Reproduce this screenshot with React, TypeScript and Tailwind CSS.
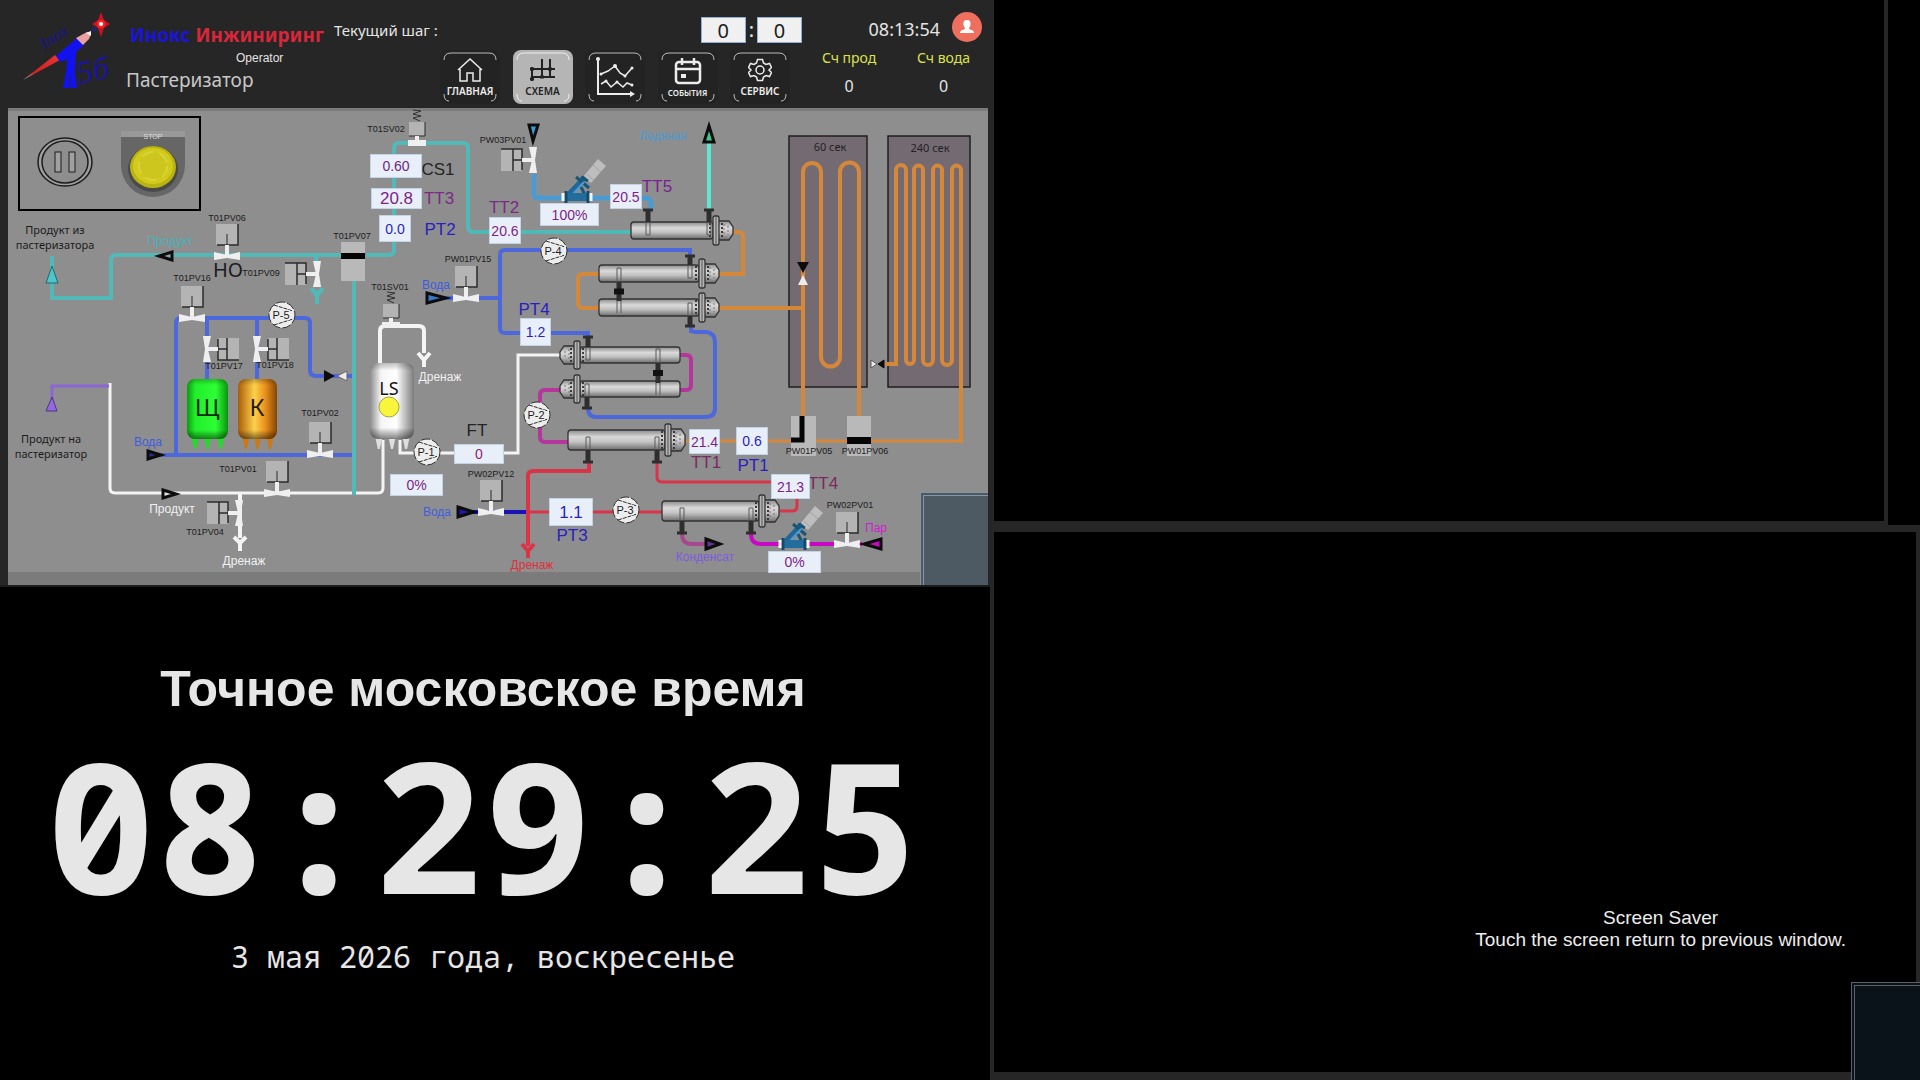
import type { ReactNode } from 'react';

const VIEW = { x: 8, y: 108, w: 980, h: 477 };

const pctX = (x: number) => `${((x - VIEW.x) / VIEW.w) * 100}%`;
const pctY = (y: number) => `${((y - VIEW.y) / VIEW.h) * 100}%`;

const C = {
  teal: '#52b9b9',
  ice: '#4a9bd3',
  cyan: '#5ce6d4',
  blue: '#4c68dc',
  orange: '#d6883a',
  magenta: '#b5359c',
  red: '#d93448',
  white: '#f4f4f4',
  violet: '#8d66d6',
};

type Pipe = { d: string; color: string; w?: number };

const pipes: Pipe[] = [
  { d: 'M52 256V298H111V260Q111 255 116 255H345', color: C.teal },
  { d: 'M366 255H389Q394 255 394 250V148Q394 143 399 143H463Q468 143 468 148V227Q468 232 473 232H632', color: C.teal },
  { d: 'M316 255V262', color: C.teal },
  { d: 'M534 174V193Q534 198 539 198H645Q651 198 651 204V210', color: C.ice, w: 5 },
  { d: 'M709 142V212', color: C.cyan },
  { d: 'M440 298H500M588 338V333H505Q500 333 500 328V255Q500 250 505 250H690V256', color: C.blue },
  { d: 'M691 326V331L695 332H706Q715 333 715 342V408Q715 417 706 417H596Q588 417 588 408', color: C.blue },
  { d: 'M160 455H352M176 455V323Q176 318 181 318H305Q310 318 310 323V370Q310 376 316 376H352M207 318V382M257 318V382', color: C.blue },
  { d: 'M732 232H738Q743 232 743 237V274H718', color: C.orange },
  { d: 'M600 274H583Q578 274 578 279V303Q578 308 583 308H600', color: C.orange },
  { d: 'M718 308H803', color: C.orange },
  { d: 'M686 441H800M815 441H850M870 441H961', color: C.orange, w: 3 },
  { d: 'M110 383V488Q110 493 115 493H378Q383 493 383 488V440', color: C.white, w: 3 },
  { d: 'M400 440V453H518V355H560', color: C.white, w: 3 },
  { d: 'M380 363V331Q380 326 385 326H419Q424 326 424 331V353', color: C.white },
  { d: 'M240 493V538', color: C.white },
  { d: 'M52 400V386H109', color: C.violet, w: 3 },
  { d: 'M680 355H686Q691 355 691 360V385Q691 390 686 390H680', color: C.magenta },
  { d: 'M560 390H545Q540 390 540 395V437Q540 442 545 442H568', color: C.magenta },
  { d: 'M589 462V471H533Q528 471 528 476V546', color: C.red },
  { d: 'M657 462V477Q657 482 662 482H775M780 511H792Q797 511 797 506V498M528 512H662', color: C.red, w: 3 },
  { d: 'M470 512H526', color: '#1b12b4' },
  { d: 'M751 534Q751 544 761 544H862', color: '#c908c6' },
  { d: 'M682 534Q682 544 692 544H708', color: '#a8478f' },
  // teal riser crosses over the water and product lines
  { d: 'M354 280V495', color: C.teal },
];

type Rotation = 'up' | 'left' | 'right';

const valves: { x: number; y: number; dir: Rotation }[] = [
  { x: 227, y: 256, dir: 'up' },
  { x: 192, y: 318, dir: 'up' },
  { x: 320, y: 454, dir: 'up' },
  { x: 277, y: 493, dir: 'up' },
  { x: 466, y: 298, dir: 'up' },
  { x: 491, y: 512, dir: 'up' },
  { x: 847, y: 544, dir: 'up' },
  { x: 533, y: 160, dir: 'left' },
  { x: 317, y: 274, dir: 'left' },
  { x: 239, y: 513, dir: 'left' },
  { x: 207, y: 349, dir: 'right' },
  { x: 257, y: 349, dir: 'right' },
];

const pumps = [
  { name: 'P-5', x: 282, y: 315 },
  { name: 'P-4', x: 554, y: 251 },
  { name: 'P-2', x: 537, y: 415 },
  { name: 'P-1', x: 427, y: 452 },
  { name: 'P-3', x: 626, y: 510 },
];

const readings = [
  { id: 'CS1', value: '0.60', x: 370, y: 154, w: 52, h: 24, cls: 'text-sm text-[#6c2a80]' },
  { id: 'TT3', value: '20.8', x: 371, y: 188, w: 51, h: 21, cls: 'text-[17px] text-[#7d1f86]' },
  { id: 'PT2', value: '0.0', x: 379, y: 215, w: 32, h: 27, cls: 'text-sm text-[#2a1fc0]' },
  { id: 'TT2', value: '20.6', x: 489, y: 217, w: 32, h: 27, cls: 'text-sm text-[#7d1f86]' },
  { id: 'Клапан PW03', value: '100%', x: 540, y: 203, w: 59, h: 23, cls: 'text-sm text-[#7d1f86]' },
  { id: 'TT5', value: '20.5', x: 610, y: 184, w: 32, h: 25, cls: 'text-sm text-[#7d1f86]' },
  { id: 'PT4', value: '1.2', x: 520, y: 318, w: 31, h: 28, cls: 'text-sm text-[#2a1fc0]' },
  { id: 'FT', value: '0', x: 454, y: 444, w: 50, h: 20, cls: 'text-sm text-[#8d1f7a]' },
  { id: 'P-1', value: '0%', x: 390, y: 474, w: 53, h: 22, cls: 'text-sm text-[#7d1f86]' },
  { id: 'PT3', value: '1.1', x: 549, y: 498, w: 44, h: 28, cls: 'text-[17px] text-[#2a1fc0]' },
  { id: 'TT1', value: '21.4', x: 689, y: 429, w: 31, h: 25, cls: 'text-sm text-[#7d1f86]' },
  { id: 'PT1', value: '0.6', x: 736, y: 427, w: 32, h: 28, cls: 'text-sm text-[#2a1fc0]' },
  { id: 'TT4', value: '21.3', x: 771, y: 474, w: 39, h: 25, cls: 'text-sm text-[#7d1f86]' },
  { id: 'Клапан PW02', value: '0%', x: 768, y: 551, w: 53, h: 22, cls: 'text-sm text-[#7d1f86]' },
];

const tag = 'text-[9px] text-[#1c1c1c]';
const sensor = 'text-[17px]';
const stream = 'text-xs';

// x/y is the centre of the text
const labels = [
  { text: 'T01SV02', x: 386, y: 130, cls: tag },
  { text: 'PW03PV01', x: 503, y: 141, cls: tag },
  { text: 'T01PV06', x: 227, y: 219, cls: tag },
  { text: 'T01PV07', x: 352, y: 237, cls: tag },
  { text: 'T01PV16', x: 192, y: 279, cls: tag },
  { text: 'T01PV09', x: 261, y: 274, cls: tag },
  { text: 'T01SV01', x: 390, y: 288, cls: tag },
  { text: 'PW01PV15', x: 468, y: 260, cls: tag },
  { text: 'T01PV17', x: 224, y: 367, cls: tag },
  { text: 'T01PV18', x: 275, y: 366, cls: tag },
  { text: 'T01PV02', x: 320, y: 414, cls: tag },
  { text: 'T01PV01', x: 238, y: 470, cls: tag },
  { text: 'T01PV04', x: 205, y: 533, cls: tag },
  { text: 'PW02PV12', x: 491, y: 475, cls: tag },
  { text: 'PW01PV05', x: 809, y: 452, cls: tag },
  { text: 'PW01PV06', x: 865, y: 452, cls: tag },
  { text: 'PW02PV01', x: 850, y: 506, cls: tag },
  { text: 'CS1', x: 438, y: 170, cls: `${sensor} text-[#242424]` },
  { text: 'TT3', x: 439, y: 199, cls: `${sensor} text-[#7a2a85]` },
  { text: 'PT2', x: 440, y: 230, cls: `${sensor} text-[#2a1fc0]` },
  { text: 'TT2', x: 504, y: 208, cls: `${sensor} text-[#7a2a85]` },
  { text: 'TT5', x: 657, y: 187, cls: `${sensor} text-[#7a1f92]` },
  { text: 'PT4', x: 534, y: 310, cls: `${sensor} text-[#2a1fc0]` },
  { text: 'FT', x: 477, y: 431, cls: `${sensor} text-[#242424]` },
  { text: 'TT1', x: 706, y: 463, cls: `${sensor} text-[#7a2a60]` },
  { text: 'PT1', x: 753, y: 466, cls: `${sensor} text-[#2a1fc0]` },
  { text: 'TT4', x: 823, y: 484, cls: `${sensor} text-[#7a2a60]` },
  { text: 'PT3', x: 572, y: 536, cls: `${sensor} text-[#2a1fc0]` },
  { text: 'НО', x: 228, y: 270, cls: "text-xl text-[#1c1c1c] font-['Noto_Sans',sans-serif]" },
  { text: 'Продукт', x: 170, y: 241, cls: `${stream} text-[#4bb0ba]` },
  { text: 'Ледяная', x: 663, y: 136, cls: `${stream} text-[#4a9bd3]` },
  { text: 'Вода', x: 148, y: 442, cls: `${stream} text-[#3f5ce0]` },
  { text: 'Вода', x: 436, y: 285, cls: `${stream} text-[#3f5ce0]` },
  { text: 'Вода', x: 437, y: 512, cls: `${stream} text-[#3f5ce0]` },
  { text: 'Продукт', x: 172, y: 509, cls: `${stream} text-[#f0f0f0]` },
  { text: 'Дренаж', x: 244, y: 561, cls: `${stream} text-[#f0f0f0]` },
  { text: 'Дренаж', x: 440, y: 377, cls: `${stream} text-[#f0f0f0]` },
  { text: 'Дренаж', x: 532, y: 565, cls: `${stream} text-[#e0303f]` },
  { text: 'Конденсат', x: 705, y: 557, cls: `${stream} text-[#7d5be0]` },
  { text: 'Пар', x: 876, y: 528, cls: `${stream} text-[#d018d0]` },
  { text: '60 сек', x: 830, y: 147, cls: "text-[11px] text-[#241f24] font-['Noto_Sans',sans-serif]" },
  { text: '240 сек', x: 930, y: 148, cls: "text-[11px] text-[#241f24] font-['Noto_Sans',sans-serif]" },
  { text: 'Щ', x: 207, y: 407, cls: "text-2xl text-[#0c2a0c] font-['Noto_Sans',sans-serif]" },
  { text: 'К', x: 257, y: 407, cls: "text-2xl text-[#2a1a08] font-['Noto_Sans',sans-serif]" },
  { text: 'LS', x: 389, y: 388, cls: "text-lg text-[#141414] font-['Noto_Sans',sans-serif]" },
  { text: 'Продукт из\nпастеризатора', x: 55, y: 237, cls: "text-[11px] leading-[15px] text-[#1c1c1c] font-['Noto_Sans',sans-serif]" },
  { text: 'Продукт на\nпастеризатор', x: 51, y: 446, cls: "text-[11px] leading-[15px] text-[#1c1c1c] font-['Noto_Sans',sans-serif]" },
];

function Valve({ x, y, dir }: { x: number; y: number; dir: Rotation }) {
  const angle = { up: 0, left: -90, right: 90 }[dir];
  return (
    <g transform={`translate(${x} ${y}) rotate(${angle})`}>
      <rect x="-11" y="-32" width="22" height="21" fill="#b4b4b4" />
      <path d="M11-32V-11H-10" fill="none" stroke="#2b2b2b" strokeWidth="1.5" />
      {dir === 'up' ? (
        <path d="M0-22V-11" stroke="#2b2b2b" />
      ) : (
        <path d="M-11-20H11M0-20V-11" stroke="#2b2b2b" strokeWidth="1.5" />
      )}
      <path d="M0-11V0" stroke="#efefef" strokeWidth="4" />
      <path d="M-13-4L0-1L13-4V4L0 2L-13 4Z" fill="#efefef" />
    </g>
  );
}

function SpringValve({ x, y }: { x: number; y: number }) {
  return (
    <g transform={`translate(${x} ${y})`}>
      <path d="M-4-33L4-32L-4-29L4-27L-4-25L3-22" fill="none" stroke="#303030" />
      <rect x="-8" y="-21" width="16" height="14" fill="#b4b4b4" />
      <path d="M8-21V-7H-8" fill="none" stroke="#2b2b2b" />
      <path d="M0-7V0" stroke="#efefef" strokeWidth="4" />
      <path d="M-9-3H9V3H-9Z" fill="#efefef" />
    </g>
  );
}

function ControlValve({ x, y }: { x: number; y: number }) {
  return (
    <g transform={`translate(${x} ${y})`}>
      <path d="M6-20L21-38L29-31L14-14Z" fill="#bdbdbd" />
      <path d="M16-32L24-25M10-23L17-16" stroke="#a2a2a2" />
      <path d="M-9-2L8-20" stroke="#1f6796" strokeWidth="5" />
      <path d="M-1-20L12-9M4-20L11-16" stroke="#195479" strokeWidth="3" />
      <path d="M-6-1L7-15" stroke="#4a9bd3" strokeWidth="2" />
      <path d="M4-10L8-2" stroke="#195479" strokeWidth="3" />
      <rect x="-12" y="-4" width="24" height="8" fill="#236d9c" />
      <path d="M-11-6V6M11-6V6" stroke="#164a6c" strokeWidth="3" />
      <path d="M-14-4V4M14-4V4" stroke="#f2f6f8" strokeWidth="3" />
    </g>
  );
}

function Pump({ x, y, name }: { x: number; y: number; name: string }) {
  return (
    <g transform={`translate(${x} ${y})`}>
      <circle r="13" fill="#ededed" stroke="#2f2f2f" strokeDasharray="9 2" />
      <path d="M-8-10L11-4M-8 10L11 4" stroke="#2f2f2f" strokeDasharray="4 1" />
      <rect x="-11" y="-5" width="19" height="10" fill="#ededed" />
      <text x="-1" y="4" textAnchor="middle" fontSize="11" fill="#1c1c1c">
        {name}
      </text>
    </g>
  );
}

// cap: which end of the shell carries the bolted flange
function Exchanger({ x, y, w, h, cap }: { x: number; y: number; w: number; h: number; cap: 'left' | 'right' }) {
  const flip = cap === 'left' ? `translate(${2 * x + w} 0) scale(-1 1)` : undefined;
  const end = x + w;
  return (
    <g transform={flip}>
      <rect x={x} y={y} width={w - 20} height={h} rx="3" fill="url(#steel)" stroke="#333" strokeWidth="1.3" />
      <path d={`M${end - 16} ${y - 1}H${end - 4}L${end} ${y + 5}V${y + h - 5}L${end - 4} ${y + h + 1}H${end - 16}Z`} fill="url(#steel)" stroke="#333" strokeWidth="1.3" />
      <path d={`M${end - 9} ${y + 2}V${y + h - 2}M${end - 5} ${y + 4}V${y + h - 4}`} stroke="#777" strokeDasharray="2 2" />
      <path d={`M${end - 23} ${y + 1}V${y + h - 1}M${end - 11} ${y + 1}V${y + h - 1}`} stroke="#3a3a3a" strokeWidth="2" strokeDasharray="2 2" />
      <rect x={end - 20} y={y - 6} width="6" height={h + 12} rx="2" fill="#b5b5b5" stroke="#333" strokeWidth="1.3" />
      <path d={`M${end - 17} ${y - 5}V${y + h + 5}`} stroke="#555" />
    </g>
  );
}

function Nozzle({ x, y, up, len = 13 }: { x: number; y: number; up?: boolean; len?: number }) {
  return (
    <g transform={`translate(${x} ${y}) ${up ? 'scale(1 -1)' : ''}`}>
      <path d="M-2 0V-13H2V0" fill="none" stroke="#5a5a5a" />
      <path d={`M0 0V${len}`} stroke="#2e2e2e" strokeWidth="5" />
      <path d={`M-5 ${len - 1}H5`} stroke="#2e2e2e" strokeWidth="3" />
    </g>
  );
}

function Coupling({ x, y1, y2 }: { x: number; y1: number; y2: number }) {
  const mid = (y1 + y2) / 2;
  return (
    <g>
      <path d={`M${x - 2} ${y1}V${y1 - 14}H${x + 2}V${y1}M${x - 2} ${y2}V${y2 + 12}M${x + 2} ${y2}V${y2 + 12}`} fill="none" stroke="#5a5a5a" />
      <path d={`M${x} ${y1}V${y2}`} stroke="#2e2e2e" strokeWidth="5" />
      <rect x={x - 5} y={mid - 3} width="10" height="6" fill="#111" />
    </g>
  );
}

function Tank({ x, y, w, h, fill, leg }: { x: number; y: number; w: number; h: number; fill: string; leg: string }) {
  return (
    <g>
      {[0.2, 0.5, 0.82].map((k) => (
        <path key={k} d={`M${x + w * k - 4} ${y + h - 4}H${x + w * k + 4}L${x + w * k + 1} ${y + h + 10}H${x + w * k - 1}Z`} fill={leg} />
      ))}
      <rect x={x} y={y} width={w} height={h} rx="8" fill={fill} />
      <rect x={x} y={y} width={w} height={h} rx="8" fill="url(#tankShade)" />
    </g>
  );
}

function Arrow({ x, y, angle, fill }: { x: number; y: number; angle: number; fill: string }) {
  return (
    <path
      transform={`translate(${x} ${y}) rotate(${angle})`}
      d="M-7-4L6 0L-7 4Z"
      fill={fill}
      stroke="#0c0c0c"
      strokeWidth="3"
    />
  );
}

function SchemeDrawing() {
  return (
    <svg
      className="block w-full h-full font-['Liberation_Sans',Arial,sans-serif]"
      viewBox={`${VIEW.x} ${VIEW.y} ${VIEW.w} ${VIEW.h}`}
      preserveAspectRatio="none"
      aria-hidden="true"
    >
      <defs>
        <linearGradient id="steel" x1="0" y1="0" x2="0" y2="1">
          <stop offset="0" stopColor="#8a8a8a" />
          <stop offset="0.35" stopColor="#dadada" />
          <stop offset="0.6" stopColor="#c2c2c2" />
          <stop offset="1" stopColor="#6c6c6c" />
        </linearGradient>
        <linearGradient id="green">
          <stop offset="0" stopColor="#0a9a10" />
          <stop offset="0.2" stopColor="#22ee2a" />
          <stop offset="0.7" stopColor="#2dff35" />
          <stop offset="1" stopColor="#0a9410" />
        </linearGradient>
        <linearGradient id="amber">
          <stop offset="0" stopColor="#a85c08" />
          <stop offset="0.42" stopColor="#ffd04a" />
          <stop offset="0.7" stopColor="#e8901c" />
          <stop offset="1" stopColor="#864405" />
        </linearGradient>
        <linearGradient id="silver">
          <stop offset="0" stopColor="#8c8c8c" />
          <stop offset="0.25" stopColor="#f5f5f5" />
          <stop offset="0.6" stopColor="#ffffff" />
          <stop offset="1" stopColor="#7c7c7c" />
        </linearGradient>
        <linearGradient id="tankShade" x1="0" y1="0" x2="0" y2="1">
          <stop offset="0" stopColor="#000" stopOpacity="0.25" />
          <stop offset="0.1" stopColor="#000" stopOpacity="0" />
          <stop offset="0.85" stopColor="#000" stopOpacity="0" />
          <stop offset="1" stopColor="#000" stopOpacity="0.5" />
        </linearGradient>
      </defs>

      <rect x="8" y="108" width="980" height="477" fill="#8e8e8e" />
      <rect x="8" y="108" width="980" height="3" fill="#7c7c7c" />
      <rect x="8" y="572" width="980" height="13" fill="#7b7b7b" />

      {/* holding tubes */}
      <rect x="789" y="136" width="78" height="251" fill="#746b72" stroke="#1f1f1f" strokeWidth="1.5" />
      <rect x="888" y="136" width="82" height="251" fill="#746b72" stroke="#1f1f1f" strokeWidth="1.5" />
      <g fill="none" stroke={C.orange} strokeWidth="4">
        <path d="M803 418V172A9 9 0 0 1 821 172V357A9.500 9.500 0 0 0 840 357V172A9.500 9.500 0 0 1 859 172V418" />
        <path d="M885 364H896V170A5 5 0 0 1 906 170V360A4 4 0 0 0 914 360V170A4.500 4.500 0 0 1 923 170V360A5 5 0 0 0 933 360V170A4.500 4.500 0 0 1 942 170V360A5 5 0 0 0 952 360V170A4.500 4.500 0 0 1 961 170V443" />
      </g>

      {pipes.map((p) => (
        <path key={p.d} d={p.d} fill="none" stroke={p.color} strokeWidth={p.w ?? 4} />
      ))}

      {/* drains */}
      <path d="M418 353L424 360L430 353M424 360V367" fill="none" stroke={C.white} strokeWidth="4" />
      <path d="M234 537L240 543L246 537M240 543V551" fill="none" stroke={C.white} strokeWidth="4" />
      <path d="M522 544L528 551L534 544M528 551V558" fill="none" stroke={C.red} strokeWidth="4" />
      <path d="M311 288L317 296L323 288M317 290V304" fill="none" stroke={C.teal} strokeWidth="4" />

      {/* diverter blocks */}
      <rect x="341" y="242" width="24" height="39" fill="#b9b9b9" />
      <rect x="341" y="253" width="24" height="6" fill="#050505" />
      <rect x="791" y="416" width="25" height="40" fill="#b9b9b9" />
      <path d="M802 416V440H791" fill="none" stroke="#050505" strokeWidth="5" />
      <rect x="847" y="416" width="24" height="40" fill="#b9b9b9" />
      <rect x="847" y="437" width="24" height="7" fill="#050505" />

      {valves.map((v) => (
        <Valve key={`${v.x}-${v.y}`} {...v} />
      ))}
      <SpringValve x={417} y={143} />
      <SpringValve x={391} y={325} />
      <ControlValve x={577} y={197} />
      <ControlValve x={794} y={544} />

      <Exchanger x={631} y={222} w={102} h={17} cap="right" />
      <Exchanger x={599} y={265} w={120} h={17} cap="right" />
      <Exchanger x={599} y={299} w={120} h={17} cap="right" />
      <Exchanger x={560} y={347} w={120} h={16} cap="left" />
      <Exchanger x={560} y={381} w={120} h={16} cap="left" />
      <Exchanger x={568} y={430} w={117} h={20} cap="right" />
      <Exchanger x={662} y={501} w={117} h={20} cap="right" />

      <Nozzle x={648} y={222} up />
      <Nozzle x={709} y={222} up />
      <Nozzle x={690} y={265} up len={10} />
      <Nozzle x={690} y={316} len={11} />
      <Nozzle x={588} y={347} up len={11} />
      <Nozzle x={587} y={397} len={12} />
      <Nozzle x={588} y={450} />
      <Nozzle x={657} y={450} />
      <Nozzle x={682} y={521} />
      <Nozzle x={751} y={521} />
      <Coupling x={619} y1={282} y2={301} />
      <Coupling x={658} y1={363} y2={383} />

      <Tank x={187} y={379} w={41} h={60} fill="url(#green)" leg="#25d92c" />
      <Tank x={238} y={379} w={39} h={60} fill="url(#amber)" leg="#c9781a" />
      <Tank x={370} y={363} w={44} h={76} fill="url(#silver)" leg="#dedede" />
      <circle cx="389" cy="407" r="10" fill="#f8f53a" stroke="#a8a540" />

      {pumps.map((p) => (
        <Pump key={p.name} {...p} />
      ))}

      <path d="M52 266L58 283H46Z" fill="#4cc6cc" stroke="#23686b" />
      <path d="M52 397L57 411H46Z" fill="#9468e0" stroke="#4b3580" />
      <Arrow x={165} y={256} angle={180} fill="#8ea8a8" />
      <Arrow x={155} y={455} angle={0} fill="#2b2f90" />
      <Arrow x={170} y={494} angle={0} fill="#e4e4e4" />
      <path d="M427 293L446 298L427 303Z" fill="#3c78c8" stroke="#0c0c0c" strokeWidth="3" />
      <path d="M458 507L474 512L458 517Z" fill="#2018a0" stroke="#0c0c0c" strokeWidth="3" />
      <path d="M529 125H538L533 141Z" fill="#3f9ad6" stroke="#0c0c0c" strokeWidth="3" />
      <path d="M709 126L714 142H704Z" fill="#3cc892" stroke="#0c0c0c" strokeWidth="3" />
      <path d="M706 539L720 544L706 549Z" fill="#5a3a90" stroke="#0c0c0c" strokeWidth="3" />
      <path d="M881 539V549L864 544Z" fill="#c40ec0" stroke="#0c0c0c" strokeWidth="3" />

      {/* check valves */}
      <path d="M324 370V382L335 376Z" fill="#0c0c0c" />
      <path d="M347 371V381L337 376Z" fill="#ececec" stroke="#666" />
      <path d="M797 262H809L803 273Z" fill="#0c0c0c" />
      <path d="M798 285H808L803 275Z" fill="#ececec" />
      <path d="M871 360V368L877 364Z" fill="#ececec" stroke="#555" />
      <path d="M884 360V368L878 364Z" fill="#0c0c0c" stroke="#0c0c0c" />
    </svg>
  );
}

function ControlBox() {
  return (
    <div
      className="absolute flex items-center justify-between border-2 border-black pl-4 pr-3"
      style={{ left: pctX(18), top: pctY(116), width: `${(183 / VIEW.w) * 100}%`, height: `${(95 / VIEW.h) * 100}%` }}
    >
      <button aria-label="Пауза">
        <svg width="58" height="54" viewBox="0 0 58 54" fill="none" stroke="#1d1d1d">
          <ellipse cx="29" cy="25" rx="27" ry="24" fill="#a0a0a0" strokeWidth="1.5" />
          <ellipse cx="29" cy="25" rx="23" ry="21" fill="#8e8e8e" strokeWidth="1.5" />
          <rect x="19" y="15" width="6" height="20" fill="#a0a0a0" />
          <rect x="33" y="15" width="6" height="20" fill="#a0a0a0" />
        </svg>
      </button>
      <button aria-label="Стоп">
        <svg width="68" height="70" viewBox="0 0 68 70">
          <path d="M2 2H66V36A32 32 0 0 1 2 36Z" fill="#666" />
          <path d="M2 2H66V8H2Z" fill="#999" />
          <text x="34" y="10" textAnchor="middle" fontSize="7" fill="#ddd">
            STOP
          </text>
          <ellipse cx="34" cy="40" rx="25" ry="23" fill="#4a4a4a" />
          <ellipse cx="34" cy="38" rx="23" ry="21" fill="#b9b411" />
          <ellipse cx="34" cy="37" rx="20" ry="18" fill="#d2cb1c" />
          <circle cx="34" cy="37" r="14" fill="#cdc61e" stroke="#d9d33a" strokeWidth="2" strokeDasharray="12 6" />
        </svg>
      </button>
    </div>
  );
}

function Scheme() {
  return (
    <div className="relative w-full aspect-[980/477] font-['Liberation_Sans',Arial,sans-serif]">
      <SchemeDrawing />
      {labels.map((l) => (
        <span
          key={`${l.text}-${l.x}-${l.y}`}
          className={`absolute -translate-x-1/2 -translate-y-1/2 whitespace-pre text-center ${l.cls}`}
          style={{ left: pctX(l.x), top: pctY(l.y) }}
        >
          {l.text}
        </span>
      ))}
      {readings.map((r) => (
        <output
          key={r.id}
          aria-label={r.id}
          className={`absolute flex items-center justify-center border border-[#c3d3e6] bg-[#e9eff8] leading-none ${r.cls}`}
          style={{
            left: pctX(r.x),
            top: pctY(r.y),
            width: `${(r.w / VIEW.w) * 100}%`,
            height: `${(r.h / VIEW.h) * 100}%`,
          }}
        >
          {r.value}
        </output>
      ))}
      <ControlBox />
      <div className="absolute right-0 bottom-0 h-[93px] w-[68px] border-t-4 border-l-4 border-double border-[#8496a3] bg-[#4d5963]" />
    </div>
  );
}

function Logo() {
  return (
    <svg className="overflow-visible" width="90" height="84" viewBox="18 8 90 84" aria-hidden="true">
      <defs>
        <linearGradient id="blade" x1="0" y1="1" x2="1" y2="0">
          <stop offset="0" stopColor="#aaa" />
          <stop offset="0.3" stopColor="#c22" />
          <stop offset="1" stopColor="#e33" />
        </linearGradient>
      </defs>
      <text transform="translate(42 50) rotate(-33)" fontSize="17" fontStyle="italic" fill="#18128c" className="font-['Liberation_Serif',serif]">
        Inox
      </text>
      <text transform="translate(77 84) rotate(-12)" fontSize="32" fontStyle="italic" fill="#1a14a0" className="font-['Liberation_Serif',serif]">
        5б
      </text>
      <path d="M21 80L53 55L58 60Z" fill="url(#blade)" />
      <path d="M54 56L75 38L82 45L74 52L73 72L75 88H61L64 72L65 59L58 62Z" fill="#1212f0" />
      <path d="M68 76V88" stroke="#262626" />
      <path d="M74 38L85 32L89 34L87 39L81 45Z" fill="#eba0a0" />
      <path d="M84 33L89 31L89 36Z" fill="#f4f4f4" />
      <path d="M90 31L95 28" stroke="#22227a" strokeWidth="3" />
      <path d="M99 12L102 20L108 24L102 28L99 37L96 28L90 24L96 20Z" fill="#c81420" />
      <circle cx="99" cy="24" r="4" fill="#f22" />
      <circle cx="99" cy="24" r="2" fill="#fff" />
    </svg>
  );
}

function NavButton({ label, active, children }: { label: string; active?: boolean; children: ReactNode }) {
  return (
    <button
      aria-label={label}
      className={`relative flex h-[54px] w-[60px] flex-col items-center justify-center rounded-lg ${
        active ? 'bg-[#b5b5b5] text-[#222]' : 'bg-[#232323] text-[#ececec]'
      }`}
    >
      <svg className="absolute inset-0 h-full w-full" viewBox="0 0 60 54" fill="none" stroke={active ? '#eee' : '#bbb'} strokeWidth="1">
        <path d="M4 10Q4 3 11 3H49Q56 3 56 10M4 44Q4 51 9 51M56 44Q56 51 51 51" />
      </svg>
      {children}
    </button>
  );
}

const navText = "mt-1 text-[10px] leading-none font-semibold font-['Noto_Sans',sans-serif]";

function Nav() {
  return (
    <nav className="flex items-center justify-between">
      <NavButton label="Главная">
        <svg width="26" height="24" viewBox="0 0 26 24" fill="none" stroke="currentColor" strokeWidth="1.5">
          <path d="M1 12L13 1L25 12M3 11V23H10V15H16V23H23V11" />
        </svg>
        <span className={navText}>ГЛАВНАЯ</span>
      </NavButton>
      <NavButton label="Схема" active>
        <svg width="26" height="24" viewBox="0 0 26 24" fill="none" stroke="currentColor" strokeWidth="2">
          <path d="M2 9V23M2 11H25M2 19H25M12 1V19M20 1V19" />
          <path d="M0 11H4M0 21H4M10 19H14M18 11H22" strokeWidth="3" />
        </svg>
        <span className={navText}>СХЕМА</span>
      </NavButton>
      <NavButton label="Графики">
        <svg width="42" height="42" viewBox="0 0 42 42" fill="none" stroke="currentColor" strokeWidth="1.5">
          <path d="M4 2V38H38" strokeWidth="2" />
          <path d="M7 18L14 15L21 10L26 17L31 20L38 12M7 28L12 25L17 31L23 26L29 31L33 27L38 29" />
          <g fill="currentColor" stroke="none">
            <circle cx="4" cy="3" r="2" />
            <circle cx="7" cy="18" r="1.500" />
            <circle cx="21" cy="10" r="2" />
            <circle cx="31" cy="20" r="1.500" />
            <circle cx="38" cy="12" r="1.500" />
            <circle cx="12" cy="25" r="1.500" />
            <circle cx="23" cy="26" r="1.500" />
            <circle cx="38" cy="29" r="1.500" />
            <path d="M36 35L41 38L36 41Z" />
          </g>
        </svg>
      </NavButton>
      <NavButton label="События">
        <svg width="28" height="28" viewBox="0 0 28 28" fill="none" stroke="currentColor" strokeWidth="2.500">
          <rect x="2" y="5" width="24" height="21" rx="3" />
          <path d="M2 12H26M8 1V8M20 1V8" />
          <rect x="7" y="17" width="5" height="4" fill="currentColor" stroke="none" />
        </svg>
        <span className="mt-1 text-[8px] leading-none font-semibold font-['Noto_Sans',sans-serif]">СОБЫТИЯ</span>
      </NavButton>
      <NavButton label="Сервис">
        <svg width="24" height="24" viewBox="0 0 24 24" fill="none" stroke="currentColor" strokeWidth="1.500">
          <path d="M9.500 1.500H14.500L15.500 5L18 6.500L21.500 5.500L23.500 9.500L21 12L23.500 14.500L21.500 18.500L18 17.500L15.500 19L14.500 22.500H9.500L8.500 19L6 17.500L2.500 18.500L.5 14.500L3 12L.5 9.500L2.500 5.500L6 6.500L8.500 5Z" />
          <circle cx="12" cy="12" r="4" />
        </svg>
        <span className={navText}>СЕРВИС</span>
      </NavButton>
    </nav>
  );
}

function PanelHeader() {
  return (
    <header className="flex h-[108px] bg-[#262626] pl-5 pr-2 text-[#e4e4e4] font-['Noto_Sans',sans-serif]">
      <div className="pt-2">
        <Logo />
      </div>
      <div className="flex w-[216px] shrink-0 flex-col pl-4 pt-5">
        <h1 className="whitespace-nowrap pl-1 text-[19px] leading-[30px] font-bold text-[#d9263a]">
          <span className="text-[#1a14d8]">Инокс</span> Инжиниринг
        </h1>
        <span className="pl-[110px] text-xs leading-4 font-['Liberation_Sans',Arial,sans-serif]">Operator</span>
        <span className="text-[19px] leading-[28px] text-[#c8c8c8]">Пастеризатор</span>
      </div>
      <div className="flex flex-1 flex-col justify-between pt-[17px] pb-1">
        <div className="flex items-start justify-between pl-2">
          <span className="text-[15px] leading-[26px]">Текущий шаг :</span>
          <div className="flex items-center gap-[3px] text-xl leading-none">
            <input
              aria-label="Минуты"
              defaultValue="0"
              className="h-[26px] w-[45px] border border-[#8fb0d4] bg-[#f0f0f0] text-center text-[#1c1c1c]"
            />
            :
            <input
              aria-label="Секунды"
              defaultValue="0"
              className="h-[26px] w-[45px] border border-[#8fb0d4] bg-[#f0f0f0] text-center text-[#1c1c1c]"
            />
          </div>
        </div>
        <div className="pl-[114px] pr-3">
          <Nav />
        </div>
      </div>
      <div className="flex w-[180px] shrink-0 flex-col pt-3">
        <div className="flex items-start justify-end gap-3 text-lg">
          <span className="leading-[34px]">08:13:54</span>
          <button aria-label="Пользователь" className="grid size-[30px] place-items-center rounded-full bg-[#ee6f5e]">
            <svg width="18" height="18" viewBox="0 0 18 18" fill="#fff">
              <path d="M9 2C12 2 13 4 12.500 7C12 9 11 9.500 11 11C13 12 16 12 16 15H2C2 12 5 12 7 11C7 9.500 6 9 5.500 7C5 4 6 2 9 2Z" />
            </svg>
          </button>
        </div>
        <dl className="flex justify-between pl-5 pr-3 text-center">
          <div>
            <dt className="text-sm leading-6 text-[#dce34a]">Сч прод</dt>
            <dd className="text-base leading-[32px]">0</dd>
          </div>
          <div>
            <dt className="text-sm leading-6 text-[#dce34a]">Сч вода</dt>
            <dd className="text-base leading-[32px]">0</dd>
          </div>
        </dl>
      </div>
    </header>
  );
}

function Clock() {
  return (
    <section className="flex flex-1 flex-col items-center bg-black pt-[66px] pr-6 text-[#e6e6e6]">
      <h2 className="text-[50px] leading-[72px] font-bold font-['Liberation_Sans',Arial,sans-serif]">
        Точное московское время
      </h2>
      <time className="pb-4 text-[182px] leading-[196px] font-bold font-['Noto_Sans_Mono','DejaVu_Sans_Mono',monospace]">08:29:25</time>
      <p className="text-[30px] leading-[40px] font-['Noto_Sans_Mono','DejaVu_Sans_Mono',monospace]">
        3 мая 2026 года, воскресенье
      </p>
    </section>
  );
}

export default function App() {
  return (
    <main className="grid min-h-screen grid-cols-[990fr_930fr] overflow-hidden bg-black">
      <div className="flex min-w-0 flex-col">
        <section className="border-b-2 border-[#1c1c1c] bg-[#262626]">
          <PanelHeader />
          <div className="pl-2 pr-[2px]">
            <Scheme />
          </div>
        </section>
        <Clock />
      </div>
      <div className="grid min-w-0 grid-rows-[525fr_555fr] border-l-4 border-[#262626]">
        <div className="flex">
          <div className="flex-1 border-r-4 border-b-4 border-[#262626] bg-black" />
          <div className="w-8 bg-black" />
        </div>
        <div className="relative flex flex-col items-end justify-end border-t-[7px] border-r-4 border-b-8 border-[#262626] bg-black pr-[70px] pb-[121px]">
          <p className="text-center text-[19px] leading-[22px] text-[#ededed] font-['Liberation_Sans',Arial,sans-serif]">
            Screen Saver
            <br />
            Touch the screen return to previous window.
          </p>
          <div className="absolute -right-1 -bottom-2 h-[98px] w-[69px] border-t-4 border-l-4 border-double border-[#5a6066] bg-[#0a121a]" />
        </div>
      </div>
    </main>
  );
}
